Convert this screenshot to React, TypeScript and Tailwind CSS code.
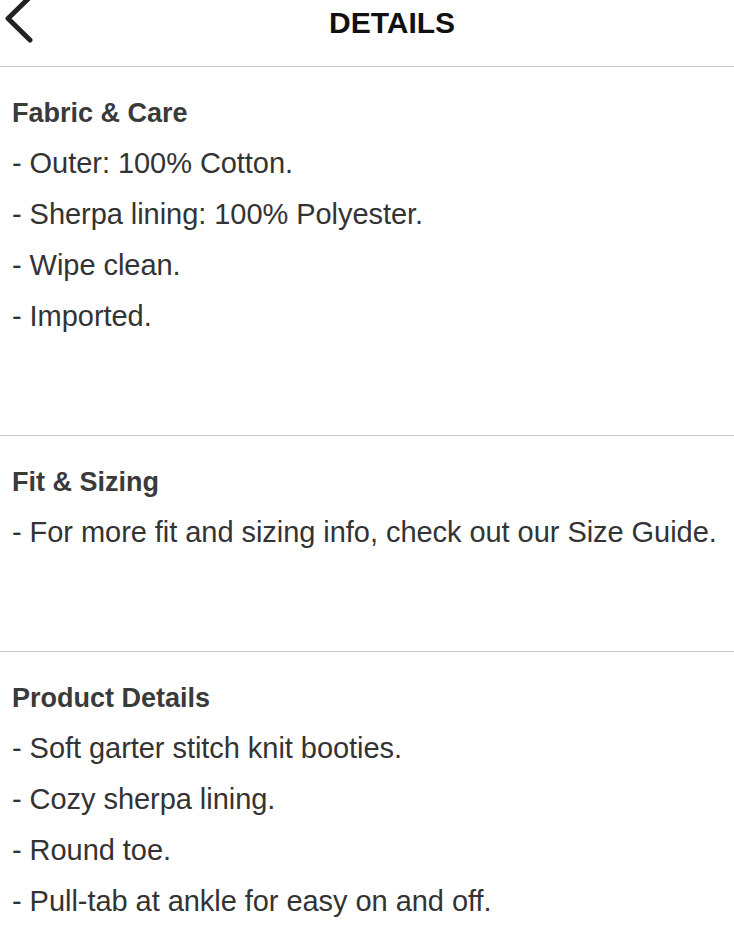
const sections = [
  {
    title: "Fabric & Care",
    items: ["- Outer: 100% Cotton.", "- Sherpa lining: 100% Polyester.", "- Wipe clean.", "- Imported."],
  },
  {
    title: "Fit & Sizing",
    items: ["- For more fit and sizing info, check out our Size Guide."],
  },
  {
    title: "Product Details",
    items: [
      "- Soft garter stitch knit booties.",
      "- Cozy sherpa lining.",
      "- Round toe.",
      "- Pull-tab at ankle for easy on and off.",
    ],
  },
];

export default function App() {
  return (
    <div className="w-[734px] h-[929px] overflow-hidden bg-white font-['Liberation_Sans',Arial,sans-serif]">
      <header className="flex items-start h-[67px] border-b border-[#c8c8c8]">
        <svg className="w-[40px] h-[44px] shrink-0" viewBox="0 0 40 44" fill="none">
          <path d="M28 -1 L8 18.5 L30 40" stroke="#222" strokeWidth={5} strokeLinecap="round" strokeLinejoin="round" />
        </svg>
        <h1 className="ml-[289px] mt-2 text-[30px] leading-none font-bold text-[#111]">DETAILS</h1>
      </header>

      {sections.map((s, i) => (
        <section
          key={s.title}
          className={`px-3 pt-[22px] pb-[93px] ${i < sections.length - 1 ? "border-b border-[#c8c8c8]" : ""}`}
        >
          <h2 className="text-[27px] leading-[49px] font-bold text-[#3a3a3a]">{s.title}</h2>
          {s.items.map((item) => (
            <p key={item} className="text-[29px] leading-[51px] tracking-[-0.05px] text-[#333] whitespace-nowrap">
              {item}
            </p>
          ))}
        </section>
      ))}
    </div>
  );
}
